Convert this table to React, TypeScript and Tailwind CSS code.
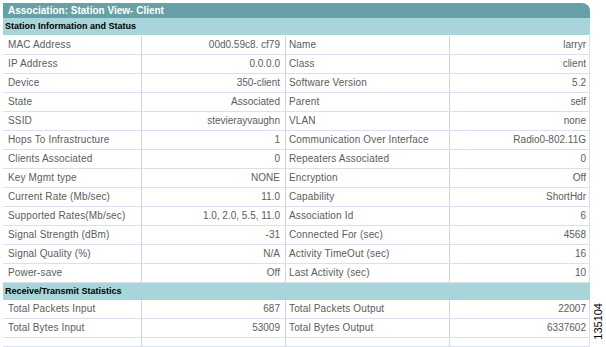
import React from "react";

type Row = [string, string, string, string];

const station: Row[] = [
  ["MAC Address", "00d0.59c8. cf79", "Name", "larryr"],
  ["IP Address", "0.0.0.0", "Class", "client"],
  ["Device", "350-client", "Software Version", "5.2"],
  ["State", "Associated", "Parent", "self"],
  ["SSID", "stevierayvaughn", "VLAN", "none"],
  ["Hops To Infrastructure", "1", "Communication Over Interface", "Radio0-802.11G"],
  ["Clients Associated", "0", "Repeaters Associated", "0"],
  ["Key Mgmt type", "NONE", "Encryption", "Off"],
  ["Current Rate (Mb/sec)", "11.0", "Capability", "ShortHdr"],
  ["Supported Rates(Mb/sec)", "1.0, 2.0, 5.5, 11.0", "Association Id", "6"],
  ["Signal Strength (dBm)", "-31", "Connected For (sec)", "4568"],
  ["Signal Quality (%)", "N/A", "Activity TimeOut (sec)", "16"],
  ["Power-save", "Off", "Last Activity (sec)", "10"],
];

const stats: Row[] = [
  ["Total Packets Input", "687", "Total Packets Output", "22007"],
  ["Total Bytes Input", "53009", "Total Bytes Output", "6337602"],
  ["", "", "", ""],
];

function DataRow({ row }: { row: Row }) {
  return (
    <div className="grid grid-cols-[139px_144px_164px_140px] h-[19.17px] border-b border-[#dbe1ec] text-[10px] leading-[18px] text-[#5c5c5c]">
      <div className="pl-[5px] tracking-[0.15px] border-r border-[#cdd5e4] whitespace-nowrap">{row[0]}</div>
      <div className="pr-[5px] text-right border-r border-[#cdd5e4] whitespace-nowrap">{row[1]}</div>
      <div className="pl-[3px] tracking-[0.15px] border-r border-[#cdd5e4] whitespace-nowrap">{row[2]}</div>
      <div className="pr-[3px] text-right border-r border-[#dbe1ec] whitespace-nowrap">{row[3]}</div>
    </div>
  );
}

export default function App() {
  return (
    <div
      className="w-[606px] h-[347px] overflow-hidden bg-white flex"
      style={{ fontFamily: '"Liberation Sans", Arial, sans-serif' }}
    >
      <div className="ml-[3px] mt-[3px] w-[587px] flex flex-col">
        {/* Title */}
        <div className="h-[15px] bg-[#67a0a6] rounded-tr-[8px] pl-[5px] text-[10px] leading-[15px] font-bold text-white">
          Association: Station View- Client
        </div>

        {/* Station info */}
        <div className="h-[17px] bg-[#a7d5d9] pl-[2px] text-[9px] leading-[17px] font-bold text-black">
          Station Information and Status
        </div>
        <div className="h-[3px]" />
        {station.map((r, i) => (
          <DataRow key={i} row={r} />
        ))}

        {/* Stats */}
        <div className="h-[17px] shrink-0 bg-[#a7d5d9] pl-[2px] text-[9px] leading-[17px] font-bold text-black">
          Receive/Transmit Statistics
        </div>
        {stats.map((r, i) => (
          <DataRow key={i} row={r} />
        ))}
      </div>

      <div className="flex-1 flex flex-col justify-end items-center pb-[7px]">
        <span className="[writing-mode:vertical-rl] rotate-180 text-[11px] leading-none text-black">
          135104
        </span>
      </div>
    </div>
  );
}
